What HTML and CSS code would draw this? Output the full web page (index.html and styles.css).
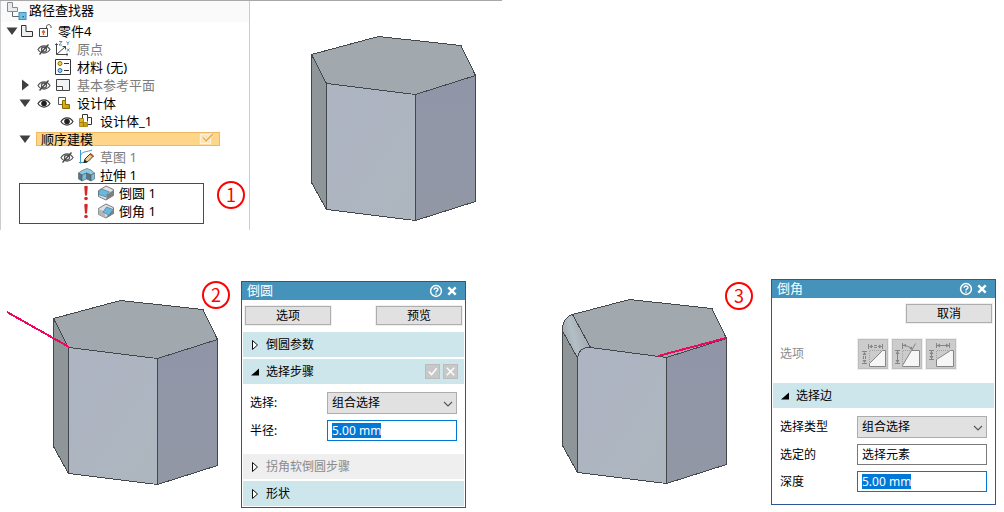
FILE: index.html
```html
<!DOCTYPE html>
<html lang="zh-CN">
<head>
  <meta charset="UTF-8" />
  <meta name="viewport" content="width=device-width, initial-scale=1.0"/>
  <title>倒圆 / 倒角</title>
  <link rel="stylesheet" href="styles.css">
</head>
<body>

  <!-- shared shapes -->
  <svg class="defs" width="0" height="0">
    <defs>
      <linearGradient id="front" x1="0" y1="0" x2="1" y2="1">
        <stop offset="0" stop-color="#aeb4c2"/><stop offset="1" stop-color="#adb6bf"/>
      </linearGradient>
      <linearGradient id="side" x1="0" y1="0" x2="0" y2="1">
        <stop offset="0" stop-color="#9096a8"/><stop offset="1" stop-color="#9197a4"/>
      </linearGradient>
      <linearGradient id="round" x1="0" y1="1" x2="1" y2="0.6">
        <stop offset="0" stop-color="#929ba1"/><stop offset="0.5" stop-color="#b3bfc6"/><stop offset="1" stop-color="#a1a9ae"/>
      </linearGradient>
      <linearGradient id="gold" x1="0" y1="0" x2="1" y2="1">
        <stop offset="0" stop-color="#e6bd2c"/><stop offset="1" stop-color="#c49506"/>
      </linearGradient>
    </defs>
    <symbol id="prism" overflow="visible">
      <path fill="#a1a9ae" d="M1.5 19.5 68.5 1.5 151 10.5 165.5 40.5 105.5 59.5 16.5 48.5z"/>
      <path fill="#8f969a" d="M1.5 19.5 16.5 48.5V174.5L1.5 147.5z"/>
      <path fill="url(#front)" d="M16.5 48.5 105.5 59.5V185.5L16.5 174.5z"/>
      <path fill="url(#side)" d="M105.5 59.5 165.5 40.5V166.5L105.5 185.5z"/>
    </symbol>
    <symbol id="eye" viewBox="0 0 16 16">
      <path d="M2 8.500C5 3.600 11 3.600 14 8.500 11 13.200 5 13.200 2 8.500z" fill="#fff" stroke="#333" stroke-width="1.200"/>
      <circle cx="8" cy="8.500" r="2.800" fill="#222"/>
    </symbol>
    <symbol id="eye-off" viewBox="0 0 16 16">
      <path d="M2 8.500C5 3.600 11 3.600 14 8.500 11 13.200 5 13.200 2 8.500z" fill="#fff" stroke="#555" stroke-width="1.200"/>
      <circle cx="8" cy="8.500" r="2.500" fill="none" stroke="#555" stroke-width="1.300"/>
      <path d="M3.500 13.500 12.500 3.500" stroke="#444" stroke-width="1.300"/>
    </symbol>
    <symbol id="caret-down" viewBox="0 0 14 14"><path d="M1.500 3.500h11L7 11z" fill="#404040"/></symbol>
    <symbol id="caret-right" viewBox="0 0 14 14"><path d="M4 1.500v11L11 7z" fill="#404040"/></symbol>
    <symbol id="alert" viewBox="0 0 16 16">
      <path d="M6.200 1.500Q8 0 9.800 1.500L9 10.500H7z" fill="#d42a2a"/><circle cx="8" cy="13.500" r="1.800" fill="#d42a2a"/>
    </symbol>
    <symbol id="closed" viewBox="0 0 8 12"><path d="M1.500 1.500v9L6.500 6z" fill="#fff" stroke="#111"/></symbol>
    <symbol id="open" viewBox="0 0 8 12"><path d="M0 9.500h8V2.500z" fill="#000"/></symbol>
    <symbol id="help" viewBox="0 0 14 14">
      <circle cx="7" cy="7" r="5.400" fill="none" stroke="#fff" stroke-width="1.500"/>
      <path d="M5.100 5.800C5.100 3.300 9 3.400 9 5.600 9 7 7 6.900 7 8.400M7 9.400v1.300" fill="none" stroke="#fff" stroke-width="1.400"/>
    </symbol>
    <symbol id="close" viewBox="0 0 14 14"><path d="M3.300 3.300l7.400 7.400M10.700 3.300l-7.400 7.400" stroke="#fff" stroke-width="2.400"/></symbol>
    <symbol id="chevron" viewBox="0 0 10 6"><path d="M1 1l4 4 4-4" fill="none" stroke="#555" stroke-width="1.100"/></symbol>
  </svg>

  <section class="overview">
    <div class="panel">
      <div class="panel-title">
        <svg width="22" height="20" viewBox="0 0 22 20">
          <path d="M2.500 1.500h5v5h5v4h-10z" fill="#e8ebed" stroke="#8a8a8a"/>
          <path d="M7.500 11v4.500H14" fill="none" stroke="#666"/>
          <rect x="14" y="11.500" width="7" height="7" fill="#72bfe2" stroke="#408fb8"/><path d="M17.500 15H19v1.500h-1.500z" fill="#24658b"/>
        </svg>
        <span>路径查找器</span>
      </div>
      <ul class="tree">
        <li class="root">
          <svg class="caret"><use href="#caret-down"/></svg>
          <svg class="icon" viewBox="0 0 16 16"><path d="M.5 2.500h4.500v6h6.500v5H.5z" fill="#eef0f1" stroke="#333"/></svg>
          <svg class="icon" viewBox="0 0 16 16">
            <path d="M.5 5.500h8v8h-8z" fill="#fff" stroke="#444"/><path d="M7.500 5V3.500C8 1 11.500 1 12 3.500V5" fill="none" stroke="#444"/>
            <path d="M4.500 12V8.500M3 9.500l1.500-1.700L6 9.500" stroke="#e0602a" stroke-width="1.300" fill="none"/>
          </svg>
          <span>零件4</span>
        </li>
        <li class="child dim">
          <i class="caret"></i>
          <svg class="icon"><use href="#eye-off"/></svg>
          <svg class="icon" viewBox="0 0 16 16">
            <path d="M.5 3v10.500h11M.5 13.500l9-8M-.8 4l1.300-1.500L1.800 4M6.500 5.500h3v3M10.500 12.200l1.500 1.300-1.500 1.300" fill="none" stroke="#444"/>
            <path d="M3 .5h3L3 4h3M10.500.5l1.300 1.700L13.200.5M11.800 2.200V4M11 7.500l2.500 3M13.500 7.500l-2.500 3" fill="none" stroke="#3d86ac" stroke-width=".9"/>
          </svg>
          <span>原点</span>
        </li>
        <li class="child">
          <i class="caret"></i>
          <i class="icon"></i>
          <svg class="icon" viewBox="0 0 16 16">
            <path d="M-.5.5h15v15h-15z" fill="#fff" stroke="#333"/>
            <circle cx="4" cy="4.500" r="2" fill="#f5d04a" stroke="#8b6a00"/><circle cx="4" cy="11.500" r="2" fill="#9fd2ed" stroke="#266f96"/>
            <path d="M8 4.500h5M8 11.500h5" stroke="#333"/>
          </svg>
          <span>材料 (无)</span>
        </li>
        <li class="child dim">
          <svg class="caret"><use href="#caret-right"/></svg>
          <svg class="icon"><use href="#eye-off"/></svg>
          <svg class="icon" viewBox="0 0 16 16">
            <path d="M.5 2.500h13v11H.5z" fill="#f2f3f4" stroke="#444"/><path d="M.5 9.500h6v4" fill="#fff" stroke="#444"/>
          </svg>
          <span>基本参考平面</span>
        </li>
        <li class="child">
          <svg class="caret"><use href="#caret-down"/></svg>
          <svg class="icon"><use href="#eye"/></svg>
          <svg class="icon" viewBox="0 0 16 16">
            <path d="M2.500 2.500h7v7h-7z" fill="#fff" stroke="#555"/>
            <path d="M6.500 5.500h3v4h4v4h-7z" fill="url(#gold)" stroke="#8b6a00"/>
          </svg>
          <span>设计体</span>
        </li>
        <li class="grandchild">
          <svg class="icon"><use href="#eye"/></svg>
          <svg class="icon" viewBox="0 0 16 16">
            <path d="M3.500 6V1.500h5v3h4v7H8" fill="#fff" stroke="#333"/><path d="M8.500 4.500v4" stroke="#333"/>
            <path d="M.5 5.500h4v4h4v4h-8z" fill="url(#gold)" stroke="#a37c00" stroke-width=".8"/><path d="M.5 9.500h4v4" fill="none" stroke="#8b6a00" stroke-width=".7"/>
          </svg>
          <span>设计体_1</span>
        </li>
        <li class="child">
          <svg class="caret"><use href="#caret-down"/></svg>
          <span class="selected">
            顺序建模
            <svg width="16" height="12" viewBox="0 0 16 12">
              <path d="M1.500 1.500h10v9h-10z" fill="#ffdfa8" stroke="#fff3dc" stroke-width="1.300"/>
              <path d="M4 4.500 7 8l7-7" fill="none" stroke="#fff3dc" stroke-width="3.500"/><path d="M4 4.500 7 8l7-7" fill="none" stroke="#f0b055" stroke-width="1.800"/>
            </svg>
          </span>
        </li>
        <li class="grandchild dim">
          <svg class="icon"><use href="#eye-off"/></svg>
          <svg class="icon" viewBox="0 0 16 16">
            <path d="M1.500 1v13.500M0 13.500h8M1.500 6C4 2 8 3 13 1" fill="none" stroke="#3c9bc4"/>
            <path d="M5 13.500 6 10 11.500 4.500l3 2.500L9 12.500z" fill="#ebcf8a" stroke="#333"/><path d="M10.500 5.500 11.500 4.500l3 2.500-1 1z" fill="#c74c33"/><path d="M4.500 14l1.200-3.500 2.500 2.500z" fill="#222"/>
          </svg>
          <span>草图 1</span>
        </li>
        <li class="grandchild">
          <i class="icon"></i>
          <svg class="icon" viewBox="0 0 16 16">
            <path d="M-.5 6 3 3.500 8 1.500l4 1.500 3.500 3L12 8 7.500 6 3 8z" fill="#8fc9e4" stroke="#5a7480" stroke-width=".7"/>
            <path d="M-.5 6 3 8v6L-.5 12zM7.500 6 12 8v6l-4.500-2z" fill="#56778a" stroke="#465b65" stroke-width=".6"/>
            <path d="M3 8l4.500-2v6L3 14zM12 8l3.500-2v6L12 14z" fill="#7ebcd9" stroke="#4a5c64" stroke-width=".6"/>
          </svg>
          <span>拉伸 1</span>
        </li>
      </ul>
      <ul class="tree failed">
        <li>
          <svg class="icon"><use href="#alert"/></svg>
          <svg class="icon" viewBox="0 0 16 16">
            <path d="M.5 5.500 8 1l7.500 3.500v6L8 15 .5 11.500z" fill="#dfe2e4" stroke="#5c6063" stroke-width=".8"/>
            <path d="M9 9.500 15.500 5v5.500L8 15z" fill="#7d8184"/>
            <path d="M.5 8C.8 6 2 5 4 4l7.500 3C9.500 8 8.500 9.500 8 12L.5 9.500z" fill="#69b9df" stroke="#426b80" stroke-width=".6"/>
          </svg>
          <span>倒圆 1</span>
        </li>
        <li>
          <svg class="icon"><use href="#alert"/></svg>
          <svg class="icon" viewBox="0 0 16 16">
            <path d="M.5 5.500 8 1l7.500 3.500v6L8 15 .5 11.500z" fill="#dfe2e4" stroke="#5c6063" stroke-width=".8"/>
            <path d="M.5 6 6 8.500 8 15 .5 11.500z" fill="#b2b6b9"/><path d="M9 13l6.500-6v3.500L8 15z" fill="#7d8184"/>
            <path d="M5 9 8.500 4l6.500 2.500L11 12.500z" fill="#69b9df" stroke="#426b80" stroke-width=".6"/>
          </svg>
          <span>倒角 1</span>
        </li>
      </ul>
      <span class="callout callout-one">1</span>
    </div>
    <svg class="model" width="168" height="188" viewBox="0 0 168 188"><use href="#prism"/></svg>
  </section>

  <main class="steps">
    <section class="step step-round">
      <svg class="model" width="214" height="188" viewBox="-46 0 214 188">
        <use href="#prism"/>
        <path class="edge" d="M-45 13 17 48"/>
      </svg>
      <span class="callout callout-two">2</span>

      <form class="dialog">
        <header>
          <h2>倒圆</h2>
          <button type="button" class="title-button" aria-label="帮助"><svg><use href="#help"/></svg></button>
          <button type="button" class="title-button" aria-label="关闭"><svg><use href="#close"/></svg></button>
        </header>
        <div class="actions">
          <button type="button">选项</button>
          <button type="button">预览</button>
        </div>
        <h3><svg><use href="#closed"/></svg>倒圆参数</h3>
        <h3>
          <svg><use href="#open"/></svg>选择步骤
          <button type="button" class="mini first" aria-label="接受"><svg viewBox="0 0 14 14"><path d="M3 7l3 3.500L11.500 3.500"/></svg></button>
          <button type="button" class="mini" aria-label="取消"><svg viewBox="0 0 14 14"><path d="M3 3l8 8M11 3l-8 8"/></svg></button>
        </h3>
        <div class="fields">
          <div class="field">
            <label for="roundSelect">选择:</label>
            <div class="select">
              <select id="roundSelect"><option>组合选择</option></select>
              <svg><use href="#chevron"/></svg>
            </div>
          </div>
          <div class="field">
            <label for="radius">半径:</label>
            <input id="radius" class="current" type="text" value="5.00 mm">
          </div>
        </div>
        <h3 class="disabled"><svg><use href="#closed"/></svg>拐角软倒圆步骤</h3>
        <h3><svg><use href="#closed"/></svg>形状</h3>
      </form>
    </section>

    <section class="step step-chamfer">
      <svg class="model" width="168" height="188" viewBox="0 0 168 188">
        <path fill="#a1a9ae" d="M11.5 16.5 68.5 1.5 151 10.5 165.5 40.5 105.5 59.5 29.5 49.5z"/>
        <path fill="#8f969a" d="M1.5 33 16.5 60V174.5L1.5 147.5z"/>
        <path fill="url(#front)" d="M16.5 60C17.5 52 22 49 29.5 49.5L105.5 59.5V185.5L16.5 174.5z"/>
        <path fill="url(#side)" d="M105.5 59.5 165.5 40.5V166.5L105.5 185.5z"/>
        <path fill="url(#round)" d="M1.5 33V28.5C3 22 6 18 11.5 16.5L29.5 49.5C22 49 17.500 52 16.500 60z"/>
        <path class="edge" d="M97 58 165 40"/>
      </svg>
      <span class="callout callout-three">3</span>

      <form class="dialog">
        <header>
          <h2>倒角</h2>
          <button type="button" class="title-button" aria-label="帮助"><svg><use href="#help"/></svg></button>
          <button type="button" class="title-button" aria-label="关闭"><svg><use href="#close"/></svg></button>
        </header>
        <div class="actions end">
          <button type="button">取消</button>
        </div>
        <div class="options">
          <span>选项</span>
          <button type="button" aria-label="等深度">
            <svg viewBox="0 0 30 30">
              <path class="face" d="M11.500 24.500 24.500 11.500H27.500V27.500H11.500z"/>
              <path class="dots" d="M12 11.500h12M11.500 12v12"/>
              <path class="dim-line" d="M10.500 5v5M24.500 5v5M12 7.500h3M20 7.500h3M16 6.500h3M16 8.500h3M4 12.500h5M4 24.500h5M6.500 14v2M6.500 21v2M5.500 17v3M7.500 17v3"/>
              <path class="tips" d="M11 7.500l3-2v4zM24 7.500l-3-2v4zM6.500 13l-2 3h4zM6.500 24l-2-3h4z"/>
            </svg>
          </button>
          <button type="button" aria-label="角度和深度">
            <svg viewBox="0 0 30 30">
              <path class="face" d="M10.500 26.500 19.500 11.500H27.500V27.500H10.500z"/>
              <path class="dots" d="M11 11.500h8M10.500 12v14"/>
              <path class="dim-line" d="M10.500 4v6M19.500 11.500l4-7M11 6.500C15 6.500 17 8 20 9.500M3 11.500h5M3 24.500h5M5.500 12v12"/>
              <path class="tips" d="M11 6l3-1v3zM21 10.500l-3.500-.5 2-2.500zM5.500 12l-2 3h4zM5.500 24l-2-3h4z"/>
            </svg>
          </button>
          <button type="button" aria-label="两个深度">
            <svg viewBox="0 0 30 30">
              <path class="face" d="M10.500 20.500 24.500 11.500H27.500V27.500H10.500z"/>
              <path class="dots" d="M11 11.500h12M10.500 12v8"/>
              <path class="dim-line" d="M10.500 4v5M23.500 4v5M11 6.500h12M3 11.500h5M3 20.500h5M5.500 12v8"/>
              <path class="tips" d="M11 6.500l3-2v4zM23 6.500l-3-2v4zM5.500 12l-2 3h4zM5.500 20l-2-3h4z"/>
            </svg>
          </button>
        </div>
        <h3><svg><use href="#open"/></svg>选择边</h3>
        <div class="fields">
          <div class="field">
            <label for="edgeType">选择类型</label>
            <div class="select">
              <select id="edgeType"><option>组合选择</option></select>
              <svg><use href="#chevron"/></svg>
            </div>
          </div>
          <div class="field">
            <label for="picked">选定的</label>
            <input id="picked" type="text" value="选择元素">
          </div>
          <div class="field">
            <label for="depth">深度</label>
            <input id="depth" class="current" type="text" value="5.00 mm">
          </div>
        </div>
      </form>
    </section>
  </main>

</body>
</html>
```
FILE: styles.css
```css
* {
  box-sizing: border-box;
}
body {
  margin: 0;
  background: #fff;
  color: #000;
  font-family: "Noto Sans", "Noto Sans CJK SC", sans-serif;
  font-size: 12px;
  line-height: 18px;
}
svg {
  display: block;
  flex: none;
}
.defs {
  position: absolute;
}
button, input, select {
  font: inherit;
  color: inherit;
  margin: 0;
}

/* path finder and model */
.overview {
  display: flex;
  align-items: flex-start;
  gap: 60px;
  width: 50%;
  border-top: 1px solid #a8a8a8;
}
.overview .model {
  margin-top: 34px;
}
.panel {
  position: relative;
  width: 250px;
  padding-bottom: 6px;
  border: solid #ccc;
  border-width: 0 1px;
  font-size: 13px;
}
.panel-title {
  display: flex;
  align-items: flex-start;
  gap: 2px;
  height: 21px;
  padding-left: 4px;
  background: #fafafa;
}
.tree {
  list-style: none;
  margin: 0;
  padding: 0;
}
.tree li {
  display: flex;
  align-items: center;
  gap: 4px;
  height: 18px;
}
.tree li > span {
  padding-left: 1px;
}
.tree .root {
  gap: 2px;
  padding-left: 4px;
}
.tree .child {
  padding-left: 17px;
}
.tree .grandchild {
  padding-left: 58px;
}
.tree .dim {
  color: #7c7c7c;
}
.caret {
  width: 14px;
  height: 14px;
}
.icon {
  width: 16px;
  height: 16px;
  overflow: visible;
}
.tree li > .selected {
  display: flex;
  align-items: center;
  justify-content: space-between;
  width: 184px;
  height: 14px;
  padding: 0 4px;
  border: 1px solid #eeb865;
  background: #ffd58a;
}
.failed {
  width: 185px;
  margin: -1px 0 0 18px;
  padding: 0 0 3px 58px;
  border: 1px solid #f00;
}
.callout {
  position: absolute;
  width: 28px;
  height: 28px;
  border: 2px solid #f00;
  border-radius: 50%;
  color: #f00;
  font-family: "Noto Sans CJK SC", sans-serif;
  font-size: 18px;
  line-height: 22px;
  text-align: center;
}
.callout-one {
  top: 180px;
  right: 4px;
}
.callout-two {
  top: 0;
  left: 202px;
}
.callout-three {
  top: 3px;
  left: 223px;
}
.model {
  overflow: visible;
  stroke: #43474a;
  stroke-linejoin: round;
  shape-rendering: crispEdges;
}
.model .edge {
  stroke: #f0055f;
  stroke-width: 2;
}

/* steps */
.steps {
  display: grid;
  grid-template-columns: 1fr 1fr;
  align-items: start;
  padding-top: 49px;
}
.step {
  display: flex;
  align-items: flex-start;
  position: relative;
}
.step .model {
  margin-top: 19px;
}
.step-round {
  gap: 21px;
  margin-top: 2px;
  padding-left: 6px;
}
.step-round .model {
  margin-top: 18px;
}
.step-chamfer {
  gap: 42px;
  padding-left: 59px;
}

/* dialogs */
.dialog {
  width: 225px;
  padding: 0 1px 1px;
  border: 1px solid #2b579a;
  background: #fff;
}
.dialog header {
  display: flex;
  align-items: center;
  gap: 2px;
  height: 18px;
  margin: 0 -1px;
  padding: 0 6px 0 5px;
  background: #4593ba;
  color: #fff;
}
.dialog h2 {
  flex: 1;
  align-self: flex-start;
  margin: 0;
  font-size: 13px;
  font-weight: normal;
  line-height: 16px;
}
.title-button {
  padding: 0;
  border: 0;
  background: none;
}
.title-button svg {
  width: 14px;
  height: 14px;
}
.actions {
  display: flex;
  justify-content: space-between;
  padding: 6px 2px 7px;
}
.actions.end {
  justify-content: flex-end;
}
.actions button {
  width: 86px;
  height: 19px;
  padding: 0;
  border: 1px solid #adadad;
  outline: 1px solid #f0f0f0;
  background: #e1e1e1;
  line-height: 16px;
}
.dialog h3 {
  display: flex;
  align-items: center;
  height: 25px;
  margin: 0 0 2px;
  padding: 0 6px 0 8px;
  background: #cce6eb;
  font-size: 12px;
  font-weight: normal;
}
.dialog h3:last-child {
  margin-bottom: 0;
}
.dialog h3 > svg {
  width: 8px;
  height: 12px;
  margin-right: 7px;
}
.dialog .disabled {
  background: #efefef;
  color: #8b8b8b;
}
.mini {
  width: 15px;
  height: 15px;
  margin-left: 3px;
  padding: 0;
  border: 1px solid #bcbcbc;
  background: #c8c8c8;
}
.mini.first {
  margin-left: auto;
}
.mini svg {
  fill: none;
  stroke: #fff;
  stroke-width: 1.5;
}
.fields {
  display: grid;
  gap: 6px;
  padding: 6px 7px 13px;
}
.fields:last-child {
  padding-bottom: 11px;
}
.field {
  display: grid;
  grid-template-columns: 77px 1fr;
  align-items: center;
}
.select {
  position: relative;
}
.select svg {
  position: absolute;
  top: 9px;
  right: 4px;
  width: 10px;
  height: 6px;
}
select, input {
  display: block;
  width: 100%;
  border-radius: 0;
}
select {
  height: 22px;
  padding: 0 4px;
  appearance: none;
  border: 1px solid #adadad;
  background: #e1e1e1;
}
input {
  height: 21px;
  padding: 1px 4px 2px;
  border: 1px solid #7a7a7a;
  background: #fff;
}
.current {
  border-color: #0078d7;
  background: linear-gradient(#0078d7, #0078d7) 4px 2px / 49px 15px no-repeat #fff;
  color: #fff;
}
.options {
  display: flex;
  align-items: center;
  gap: 4px;
  padding: 9px 7px 14px;
}
.options span {
  width: 74px;
  color: #8b8b8b;
}
.options button {
  width: 30px;
  height: 30px;
  padding: 0;
  border: 0;
  outline: 1px solid #eee;
  background: #ccc;
  box-shadow: inset 0 0 0 1px #bdbdbd;
}
.options svg {
  width: 30px;
  height: 30px;
  fill: none;
  stroke: #858585;
}
.options .face {
  fill: #f6f6f6;
}
.options .dots {
  stroke: #a0a0a0;
  stroke-dasharray: 1 1;
}
.options .tips {
  fill: #858585;
  stroke: none;
}
```
